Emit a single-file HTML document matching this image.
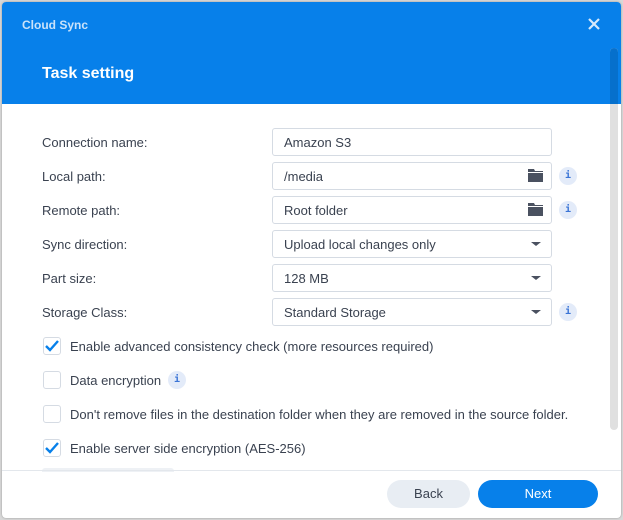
<!DOCTYPE html>
<html><head><style>
*{box-sizing:border-box;margin:0;padding:0}
body{width:623px;height:520px;background:#d8d8d8;font-family:"Liberation Sans",sans-serif;position:relative;overflow:hidden}
.dlg{position:absolute;left:2px;top:2px;width:619px;height:516px;background:#fff;border-radius:4px;overflow:hidden;box-shadow:0 0 2px rgba(0,0,0,.3)}
.hd{position:absolute;left:0;top:0;width:619px;height:102px;background:#0780ea}
.app{position:absolute;left:20px;top:16px;color:#c9e2fa;font-size:12px;font-weight:bold}
.x{position:absolute;left:585px;top:15px}
.title{position:absolute;left:40px;top:63px;color:#fff;font-size:16px;font-weight:bold}
.sb{position:absolute;left:608px;top:46px;width:8px;height:382px;border-radius:4px;background:#e0e0e0}
.sbh{position:absolute;left:608px;top:46px;width:8px;height:56px;border-radius:4px 4px 0 0;background:#0670cc}
.lbl{position:absolute;left:40px;font-size:13px;color:#3a4250}
.inp{position:absolute;left:270px;width:280px;height:28px;border:1px solid #d5dbe3;border-radius:3px;font-size:13px;color:#3a4250;padding:6px 11px}
.fold{position:absolute;right:8px;top:6px}
.car{position:absolute;right:10px;top:11px;width:0;height:0;border-left:5px solid transparent;border-right:5px solid transparent;border-top:4px solid #4a5160}
.info{position:absolute;width:18px;height:18px;border-radius:50%;background:#e3ebf9;color:#3a74d6;font-size:10px;font-weight:bold;text-align:center;line-height:18px;font-family:"DejaVu Sans Mono",monospace}
.cb{position:absolute;left:41px;width:18px;height:18px;border:1px solid #d5dbe3;border-radius:3px}
.ct{position:absolute;left:68px;font-size:13px;color:#3a4250}
.ft{position:absolute;left:0;top:468px;width:619px;border-top:1px solid #e3e7ec}
.btn{position:absolute;top:478px;height:28px;border-radius:14px;font-size:13px;text-align:center;line-height:28px}
</style></head><body>
<div class="dlg">
<div class="hd"></div>
<div class="app">Cloud Sync</div>
<svg class="x" width="14" height="14" viewBox="0 0 14 14"><path d="M2 2L12 12M12 2L2 12" stroke="#d7e9fb" stroke-width="2.2"/></svg>
<div class="title">Task setting</div>
<div class="sb"></div><div class="sbh"></div>

<div class="lbl" style="top:133px">Connection name:</div>
<div class="inp" style="top:126px">Amazon S3</div>
<div class="lbl" style="top:167px">Local path:</div>
<div class="inp" style="top:160px">/media<svg class="fold" width="15" height="13" viewBox="0 0 15 13"><path d="M0 0h6l1 2h8v11H0z" fill="#4a5160"/><path d="M0 3.5h15" stroke="#fff" stroke-width="1"/></svg></div>
<div class="info" style="left:557px;top:165px">i</div>
<div class="lbl" style="top:201px">Remote path:</div>
<div class="inp" style="top:194px">Root folder<svg class="fold" width="15" height="13" viewBox="0 0 15 13"><path d="M0 0h6l1 2h8v11H0z" fill="#4a5160"/><path d="M0 3.5h15" stroke="#fff" stroke-width="1"/></svg></div>
<div class="info" style="left:557px;top:199px">i</div>
<div class="lbl" style="top:235px">Sync direction:</div>
<div class="inp" style="top:228px">Upload local changes only<div class="car"></div></div>
<div class="lbl" style="top:269px">Part size:</div>
<div class="inp" style="top:262px">128 MB<div class="car"></div></div>
<div class="lbl" style="top:303px">Storage Class:</div>
<div class="inp" style="top:296px">Standard Storage<div class="car"></div></div>
<div class="info" style="left:557px;top:301px">i</div>

<div class="cb" style="top:335px"><svg width="16" height="16" viewBox="0 0 16 16"><path d="M2 8l4 4 8-9" stroke="#0780ea" stroke-width="2.4" fill="none"/></svg></div>
<div class="ct" style="top:337px">Enable advanced consistency check (more resources required)</div>
<div class="cb" style="top:369px"></div>
<div class="ct" style="top:371px">Data encryption</div>
<div class="info" style="left:166px;top:369px">i</div>
<div class="cb" style="top:403px"></div>
<div class="ct" style="top:405px">Don't remove files in the destination folder when they are removed in the source folder.</div>
<div class="cb" style="top:437px"><svg width="16" height="16" viewBox="0 0 16 16"><path d="M2 8l4 4 8-9" stroke="#0780ea" stroke-width="2.4" fill="none"/></svg></div>
<div class="ct" style="top:439px">Enable server side encryption (AES-256)</div>
<div style="position:absolute;left:40px;top:466px;width:132px;height:4px;background:#eef1f5;border-radius:3px 3px 0 0"></div>

<div class="ft"></div>
<div class="btn" style="left:385px;width:83px;background:#e8edf3;color:#3a4250">Back</div>
<div class="btn" style="left:476px;width:120px;background:#0780ea;color:#fff">Next</div>
</div>
</body></html>
